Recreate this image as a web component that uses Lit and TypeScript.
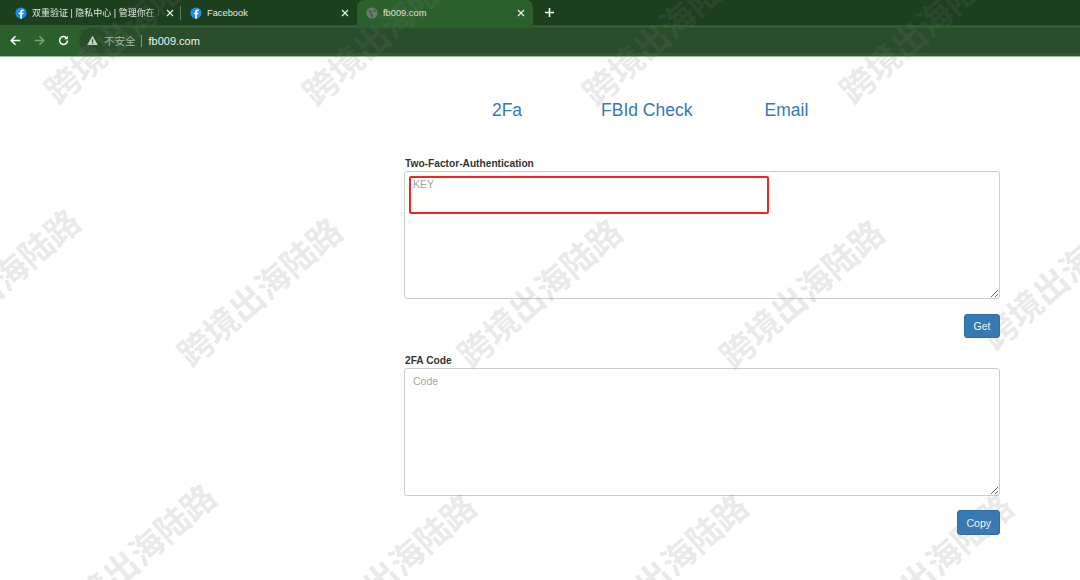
import { LitElement, html, css } from "lit";
import { customElement } from "lit/decorators.js";

const FB = html`<svg class="fav" viewBox="0 0 16 16"><circle cx="8" cy="8" r="7.500" fill="#1a8cf0"/><path d="M9.300 15.500V9.800h1.800l.4-2.200H9.300V6.300c0-.7.3-1.100 1.100-1.100h1.100V3.300c-.4-.1-1-.1-1.600-.1-1.800 0-2.900 1-2.900 2.900v1.500H5.100v2.200H7v5.700z" fill="#fff"/></svg>`;
const CLOSE = html`<svg class="x" viewBox="0 0 8 8"><path d="M1 1l6 6M7 1L1 7" stroke="#e8efe8" stroke-width="1.200" fill="none"/></svg>`;
const MARKS: [number, number][] = [
  [126, 28], [384, 30], [664, 30], [921, 28],
  [-3, 282], [259, 291], [539, 292], [801, 293], [1063, 274],
  [133, 557], [393, 567], [665, 567], [930, 567],
];

@customElement("app-root")
export class AppRoot extends LitElement {
  static styles = css`
    :host { display: block; position: relative; width: 1080px; height: 580px; overflow: hidden; background: #fff; font-family: "Liberation Sans", "Noto Sans CJK SC", sans-serif; }
    .tabs { height: 25px; background: #1c3f1d; display: flex; align-items: stretch; color: #e4ebe4; }
    .tab { width: 176px; display: flex; align-items: center; gap: 5px; padding: 0 8px 0 9px; box-sizing: border-box; position: relative; }
    .tab span { flex: 1; white-space: nowrap; overflow: hidden; font-size: 9.300px; }
    .tab.first { width: 181px; padding: 0 7px 0 15px; }
    .tab.first span { font-size: 9px; -webkit-mask-image: linear-gradient(90deg, #000 90%, transparent); mask-image: linear-gradient(90deg, #000 90%, transparent); }
    .tab.first::after { content: ""; position: absolute; right: 0; top: 6px; height: 14px; width: 1px; background: #5d7c5e; }
    .tab.active { background: #2b602c; border-radius: 7px 7px 0 0; }
    .fav { width: 12px; height: 12px; flex: none; }
    .x { width: 8px; height: 8px; flex: none; }
    .plus { width: 11px; height: 11px; margin: 7px 0 0 11px; }
    .bar { height: 28px; background: #2b602c; border-bottom: 1px solid #99b69a; display: flex; align-items: flex-start; padding-top: 3px; }
    .nav-icons { display: flex; align-items: center; gap: 13px; padding-left: 10px; height: 25px; width: 70px; box-sizing: border-box; flex: none; }
    .nav-icons svg { width: 11px; height: 11px; }
    .omni { flex: 1; height: 25px; margin-left: 9px; padding-left: 8px; background: #2a4e2b; border-radius: 13px 0 0 13px; display: flex; align-items: center; gap: 6px; font-size: 11px; color: #eef3ee; }
    .omni svg { width: 11px; height: 11px; }
    .unsafe { font-size: 10.500px; color: #a9bcaa; padding-right: 5px; margin-right: 1px; border-right: 1px solid #7d967e; line-height: 12px; }
    main { position: relative; padding: 42px 80px 0 404px; }
    nav { display: flex; height: 22px; align-items: center; }
    nav a { flex: none; width: 206px; margin-right: -66.250px; text-align: center; color: #337ab7; font-size: 17.500px; line-height: 22px; }
    .form { margin-top: 37px; display: flex; flex-direction: column; }
    label { font-size: 10.200px; font-weight: bold; color: #333; line-height: 12px; height: 12px; margin-left: 1px; margin-bottom: 1px; }
    textarea { display: block; width: 596px; height: 128px; box-sizing: border-box; border: 1px solid #ccc; border-radius: 3px; padding: 6px 8px; font: 10.500px "Liberation Sans", sans-serif; color: #555; outline: none; margin: 0; background: transparent; }
    textarea::placeholder { color: #a3a3a3; opacity: 1; }
    .actions { display: flex; justify-content: flex-end; margin: 15px 0 17px; }
    .actions.last { margin-top: 14px; }
    .btn { height: 24px; padding: 0 8.500px; box-sizing: border-box; background: #337ab7; border: 1px solid #2e6da4; border-radius: 3px; color: #fff; font: 10.500px "Liberation Sans", sans-serif; }
    .copy { height: 25px; padding: 0 8px; }
    .mark { position: absolute; left: 409px; top: 176px; width: 360px; height: 38px; box-sizing: border-box; border: 2px solid #f5251d; border-radius: 2px; pointer-events: none; }
    .wm { position: absolute; pointer-events: none; white-space: nowrap; font-size: 34px; font-weight: bold; line-height: 36px; color: rgba(120,120,120,.17); transform: translate(-50%,-50%) rotate(-41deg); font-family: "Noto Sans CJK SC", sans-serif; }
  `;

  render() {
    return html`
      <div class="tabs">
        <div class="tab first">${FB}<span>双重验证 | 隐私中心 | 管理你在 Facebook</span>${CLOSE}</div>
        <div class="tab">${FB}<span>Facebook</span>${CLOSE}</div>
        <div class="tab active">
          <svg class="fav" viewBox="0 0 16 16"><circle cx="8" cy="8" r="7.500" fill="#6e7a72"/><path d="M3 3.500l5 2-1 3.500 2.500 2-1.500 4M10 1.500l4 4-3.500 1z" fill="#3d5d44"/></svg>
          <span>fb009.com</span>${CLOSE}
        </div>
        <svg class="plus" viewBox="0 0 11 11"><path d="M5.500 1v9M1 5.500h9" stroke="#fff" stroke-width="1.500"/></svg>
      </div>
      <div class="bar">
        <div class="nav-icons">
          <svg viewBox="0 0 14 14"><path d="M13 7H2M7 1.500L1.500 7 7 12.500" stroke="#fff" stroke-width="1.900" fill="none"/></svg>
          <svg viewBox="0 0 14 14"><path d="M1 7h11M7 1.500L12.500 7 7 12.500" stroke="#7f9c80" stroke-width="1.900" fill="none"/></svg>
          <svg viewBox="0 0 14 14"><path d="M12 7a5 5 0 1 1-1.500-3.600" stroke="#fff" stroke-width="1.900" fill="none"/><path d="M12.500 1v4.500H8z" fill="#fff"/></svg>
        </div>
        <div class="omni">
          <svg viewBox="0 0 12 12"><path d="M6 .8L11.800 11H.2z" fill="#c6d0c6"/><path d="M5.400 4.500h1.200v3.300H5.400zM5.400 8.500h1.200v1.200H5.400z" fill="#2a4e2b"/></svg>
          <span class="unsafe">不安全</span><span>fb009.com</span>
        </div>
      </div>
      <main>
        <nav><a>2Fa</a><a>FBId Check</a><a>Email</a></nav>
        <div class="form">
          <label>Two-Factor-Authentication</label>
          <textarea placeholder="KEY"></textarea>
          <div class="actions"><button class="btn">Get</button></div>
          <label>2FA Code</label>
          <textarea placeholder="Code"></textarea>
          <div class="actions last"><button class="btn copy">Copy</button></div>
        </div>
      </main>
      <div class="mark"></div>
      ${MARKS.map(([x, y]) => html`<div class="wm" style="left:${x}px;top:${y}px">跨境出海陆路</div>`)}
    `;
  }
}
